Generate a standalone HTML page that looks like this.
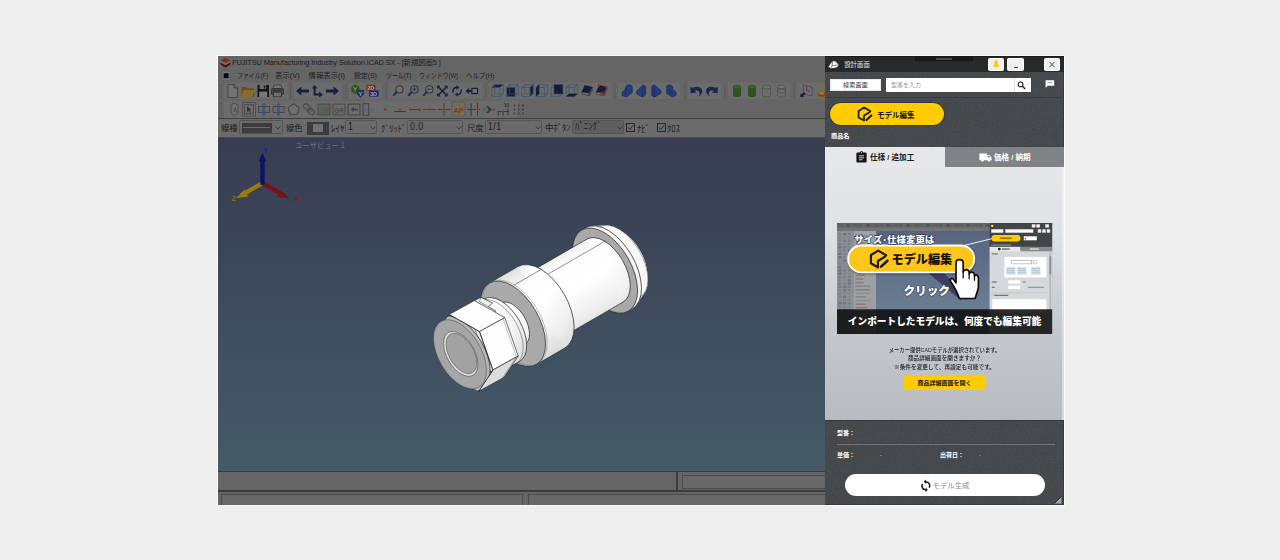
<!DOCTYPE html>
<html lang="ja">
<head>
<meta charset="utf-8">
<title>iCAD SX</title>
<style>
*{box-sizing:border-box;margin:0;padding:0}
html,body{width:1280px;height:560px;overflow:hidden;background:#eeeeee}
body{position:relative;font-family:"Liberation Sans","Noto Sans CJK JP",sans-serif;}
.abs{position:absolute}
i{font-style:normal;display:block}
#cad{position:absolute;left:218px;top:56px;width:608px;height:448.5px;background:#656565;overflow:hidden}
#cad .title{position:absolute;left:14px;top:1px;font-size:7.4px;line-height:12px;color:#1e1e1e;white-space:nowrap;letter-spacing:-0.09px}
#cad .menu{position:absolute;left:0;top:13px;height:13px;width:100%;font-size:7.4px;line-height:13px;color:#1e1e1e;white-space:nowrap}
#cad .menu span{position:absolute;top:0;transform-origin:0 50%;display:inline-block}
#view{position:absolute;left:0;top:82px;width:608px;height:333px;background:linear-gradient(#393d51 0%,#3c475a 38%,#415262 70%,#465a68 100%)}
#view .lbl{position:absolute;left:77px;top:3px;font-size:7.2px;line-height:10px;color:#6f778a;letter-spacing:0.2px;white-space:nowrap}
.hline{position:absolute;left:0;width:100%;height:1px}
#panel{position:absolute;left:825.3px;top:56px;width:238.7px;height:448.5px;background:#43474a;overflow:hidden;box-shadow:inset -1px -1px 0 #34373a}
#panel .tbar{position:absolute;left:0;top:0;width:100%;height:16px;background:#27292b;border-top:1px solid #1b1c1d}
#panel .notch{position:absolute;left:90px;top:0;width:58px;height:5px;background:#191919;border-radius:0 0 1px 1px}
#panel .notch i{position:absolute;left:21px;top:2px;width:16px;height:2px;background:#4b4b4b}
#panel .ptitle{position:absolute;left:19.5px;top:3.9px;font-size:6.3px;line-height:10px;color:#e4e4e4;white-space:nowrap}
#panel .wb{position:absolute;top:2px;width:16px;height:13px;background:#efefef;border:1px solid #fff;border-radius:1.5px;overflow:hidden}
#panel .wb svg{position:absolute;left:-1px;top:-1px}
#panel .sbtn{position:absolute;left:5px;top:23px;width:51px;height:12px;background:#fff;border:1px solid #e8e8e8;font-size:6px;line-height:10.8px;text-align:center;color:#333;letter-spacing:0.2px}
#panel .sinp{position:absolute;left:61px;top:22px;width:145px;height:14px;background:#fff}
#panel .sinp span{position:absolute;left:5px;top:2px;font-size:6px;line-height:10px;color:#9a9a9a;white-space:nowrap}
#panel .sinp i{position:absolute;left:128px;top:0;width:1px;height:14px;background:#ddd}
#panel .ybtn{position:absolute;left:5px;top:47px;width:114px;height:22px;border-radius:11px;background:#ffcc00;box-shadow:0 0 0 0.8px #2c3150}
#panel .ybtn span{position:absolute;left:47px;top:7px;font-size:7.5px;line-height:12px;font-weight:700;color:#1a1a1a;white-space:nowrap}
#panel .pname{position:absolute;left:6px;top:74.6px;font-size:6.2px;line-height:10px;font-weight:700;color:#fff;white-space:nowrap}
#panel .tabs{position:absolute;left:0;top:90.6px;width:239px;height:20px}
#panel .tab{position:absolute;top:0;height:20px;font-size:7.6px;font-weight:700;white-space:nowrap}
#panel .tab span{position:absolute;top:5px;line-height:11px}
#panel .tab.on{left:0;width:120px;background:#e5e7e9;color:#1c1c1c}
#panel .tab.off{left:120px;width:119px;background:#7f8386;color:#fff}
#panel .content{position:absolute;left:0;top:110.6px;width:239px;height:253.4px;background:linear-gradient(#e5e7e9 0%,#dfe2e4 25%,#c5c9cd 62%,#b8bcc1 100%)}
#panel .cstrip{position:absolute;right:0;top:0;width:2px;height:100%;background:rgba(255,255,255,.42)}
#panel .msg{position:absolute;left:0;top:179px;width:239px;text-align:center;font-size:6.2px;line-height:8.6px;color:#1a1a1a;font-weight:500;white-space:nowrap}
#panel .msg span{display:block;transform-origin:50% 50%}
#panel .obtn{position:absolute;left:79px;top:209.4px;width:81px;height:14px;background:#ffcc00;font-size:6px;line-height:14px;text-align:center;color:#1a1a1a;font-weight:700;white-space:nowrap}
#panel .foot{position:absolute;left:0;top:364px;width:239px;height:85px;border-top:1px solid #33363a}
#panel .fl{position:absolute;font-size:6px;line-height:10px;font-weight:700;color:#fff;white-space:nowrap}
#panel .fd{position:absolute;font-size:6px;line-height:10px;color:#ccc}
#panel .fline{position:absolute;left:12px;top:22.8px;width:218px;height:1.4px;background:#707478}
#panel .gen{position:absolute;left:19.5px;top:53px;width:200px;height:22.3px;border-radius:11.2px;background:#fff}
#panel .gen span{position:absolute;left:88px;top:6px;font-size:7.4px;line-height:11px;color:#8a8a8a;white-space:nowrap}
#prop{position:absolute;left:0;top:63px;width:608px;height:18px;background:#6b6b6b}
#prop .pl{position:absolute;top:3.6px;line-height:11px;color:#1c1c1c;white-space:nowrap;transform-origin:0 50%;display:inline-block}
#prop .cb{position:absolute;top:1.1px;margin-left:-1px;height:14px;border:0.8px solid #545454;border-radius:1.5px;background:#6a6a6a}
#prop .cb .cv{position:absolute;top:0.3px;font-size:10px;line-height:11px;color:#1e1e1e;white-space:nowrap;letter-spacing:0.5px;transform:scaleX(.88);transform-origin:0 50%;display:inline-block}
#prop .ck{position:absolute;top:3.6px;margin-left:-1px;width:9px;height:9px;border:0.9px solid #2a2a2a;background:#6c6c6c}
.sunk{border:1px solid #4a4a4a;background:#686868}
</style>
</head>
<body>
<div class="abs" style="left:217px;top:55px;width:848px;height:450.6px;background:#f9f9f9"></div>
<div id="cad">
  <svg class="abs" style="left:2px;top:1px" width="11" height="12" viewBox="0 0 11 12"><path d="M5.500 0.800l4.800 2.600-4.800 2.800L0.600 3.400z" fill="#8e2a1c"/><path d="M0.600 3.400v2l4.900 2.800 4.800-2.800v-2L5.500 6.200z" fill="#6e7476"/><path d="M0.600 5.400v2.200l4.900 3.200 4.800-3.200V5.400L5.500 8.200z" fill="#4a120c"/></svg>
  <div class="title">FUJITSU Manufacturing Industry Solution iCAD SX - [新規図面5 ]</div>
  <svg class="abs" style="left:3px;top:14px" width="10" height="11" viewBox="0 0 10 11"><rect x="1" y="1" width="8" height="9.400" rx="1" fill="#7a7a7a" stroke="#555" stroke-width="0.600"/><rect x="2.600" y="3.200" width="5" height="5" fill="#0a0a12"/><path d="M2.600 8.800h5" stroke="#3a6a8a" stroke-width="0.800"/></svg>
  <div class="menu"><span style="left:18.500px;transform:scaleX(.80)">ファイル(F)</span><span style="left:57px;transform:scaleX(1)">表示(V)</span><span style="left:90.5px;transform:scaleX(1)">情報表示(I)</span><span style="left:136px;transform:scaleX(.93)">設定(S)</span><span style="left:167.500px;transform:scaleX(.80)">ツール(T)</span><span style="left:201px;transform:scaleX(.80)">ウィンドウ(W)</span><span style="left:247.500px;transform:scaleX(.87)">ヘルプ(H)</span></div>
  <svg class="abs" style="left:0;top:0;filter:blur(0.4px)" width="608" height="64" viewBox="0 0 608 64"><rect x="6" y="26.5" width="64" height="16.5" fill="#6b6b6b"/><rect x="76" y="26.5" width="48" height="16.5" fill="#6b6b6b"/><rect x="131" y="26.5" width="33" height="16.5" fill="#6b6b6b"/><rect x="171" y="26.5" width="93" height="16.5" fill="#6b6b6b"/><rect x="271" y="26.5" width="122" height="16.5" fill="#6b6b6b"/><rect x="400" y="26.5" width="62" height="16.5" fill="#6b6b6b"/><rect x="470" y="26.5" width="33" height="16.5" fill="#6b6b6b"/><rect x="510" y="26.5" width="62" height="16.5" fill="#6b6b6b"/><rect x="579" y="26.5" width="29" height="16.5" fill="#6b6b6b"/><rect x="2.5" y="28" width="1" height="1" fill="#4c4c4c"/><rect x="2.5" y="30" width="1" height="1" fill="#4c4c4c"/><rect x="2.5" y="32" width="1" height="1" fill="#4c4c4c"/><rect x="2.5" y="34" width="1" height="1" fill="#4c4c4c"/><rect x="2.5" y="36" width="1" height="1" fill="#4c4c4c"/><rect x="2.5" y="38" width="1" height="1" fill="#4c4c4c"/><rect x="2.5" y="40" width="1" height="1" fill="#4c4c4c"/><rect x="2.5" y="42" width="1" height="1" fill="#4c4c4c"/><rect x="72.0" y="28" width="1" height="1" fill="#4c4c4c"/><rect x="72.0" y="30" width="1" height="1" fill="#4c4c4c"/><rect x="72.0" y="32" width="1" height="1" fill="#4c4c4c"/><rect x="72.0" y="34" width="1" height="1" fill="#4c4c4c"/><rect x="72.0" y="36" width="1" height="1" fill="#4c4c4c"/><rect x="72.0" y="38" width="1" height="1" fill="#4c4c4c"/><rect x="72.0" y="40" width="1" height="1" fill="#4c4c4c"/><rect x="72.0" y="42" width="1" height="1" fill="#4c4c4c"/><rect x="127.5" y="28" width="1" height="1" fill="#4c4c4c"/><rect x="127.5" y="30" width="1" height="1" fill="#4c4c4c"/><rect x="127.5" y="32" width="1" height="1" fill="#4c4c4c"/><rect x="127.5" y="34" width="1" height="1" fill="#4c4c4c"/><rect x="127.5" y="36" width="1" height="1" fill="#4c4c4c"/><rect x="127.5" y="38" width="1" height="1" fill="#4c4c4c"/><rect x="127.5" y="40" width="1" height="1" fill="#4c4c4c"/><rect x="127.5" y="42" width="1" height="1" fill="#4c4c4c"/><rect x="167.5" y="28" width="1" height="1" fill="#4c4c4c"/><rect x="167.5" y="30" width="1" height="1" fill="#4c4c4c"/><rect x="167.5" y="32" width="1" height="1" fill="#4c4c4c"/><rect x="167.5" y="34" width="1" height="1" fill="#4c4c4c"/><rect x="167.5" y="36" width="1" height="1" fill="#4c4c4c"/><rect x="167.5" y="38" width="1" height="1" fill="#4c4c4c"/><rect x="167.5" y="40" width="1" height="1" fill="#4c4c4c"/><rect x="167.5" y="42" width="1" height="1" fill="#4c4c4c"/><rect x="267.5" y="28" width="1" height="1" fill="#4c4c4c"/><rect x="267.5" y="30" width="1" height="1" fill="#4c4c4c"/><rect x="267.5" y="32" width="1" height="1" fill="#4c4c4c"/><rect x="267.5" y="34" width="1" height="1" fill="#4c4c4c"/><rect x="267.5" y="36" width="1" height="1" fill="#4c4c4c"/><rect x="267.5" y="38" width="1" height="1" fill="#4c4c4c"/><rect x="267.5" y="40" width="1" height="1" fill="#4c4c4c"/><rect x="267.5" y="42" width="1" height="1" fill="#4c4c4c"/><rect x="396.5" y="28" width="1" height="1" fill="#4c4c4c"/><rect x="396.5" y="30" width="1" height="1" fill="#4c4c4c"/><rect x="396.5" y="32" width="1" height="1" fill="#4c4c4c"/><rect x="396.5" y="34" width="1" height="1" fill="#4c4c4c"/><rect x="396.5" y="36" width="1" height="1" fill="#4c4c4c"/><rect x="396.5" y="38" width="1" height="1" fill="#4c4c4c"/><rect x="396.5" y="40" width="1" height="1" fill="#4c4c4c"/><rect x="396.5" y="42" width="1" height="1" fill="#4c4c4c"/><rect x="466.5" y="28" width="1" height="1" fill="#4c4c4c"/><rect x="466.5" y="30" width="1" height="1" fill="#4c4c4c"/><rect x="466.5" y="32" width="1" height="1" fill="#4c4c4c"/><rect x="466.5" y="34" width="1" height="1" fill="#4c4c4c"/><rect x="466.5" y="36" width="1" height="1" fill="#4c4c4c"/><rect x="466.5" y="38" width="1" height="1" fill="#4c4c4c"/><rect x="466.5" y="40" width="1" height="1" fill="#4c4c4c"/><rect x="466.5" y="42" width="1" height="1" fill="#4c4c4c"/><rect x="506.5" y="28" width="1" height="1" fill="#4c4c4c"/><rect x="506.5" y="30" width="1" height="1" fill="#4c4c4c"/><rect x="506.5" y="32" width="1" height="1" fill="#4c4c4c"/><rect x="506.5" y="34" width="1" height="1" fill="#4c4c4c"/><rect x="506.5" y="36" width="1" height="1" fill="#4c4c4c"/><rect x="506.5" y="38" width="1" height="1" fill="#4c4c4c"/><rect x="506.5" y="40" width="1" height="1" fill="#4c4c4c"/><rect x="506.5" y="42" width="1" height="1" fill="#4c4c4c"/><rect x="575.5" y="28" width="1" height="1" fill="#4c4c4c"/><rect x="575.5" y="30" width="1" height="1" fill="#4c4c4c"/><rect x="575.5" y="32" width="1" height="1" fill="#4c4c4c"/><rect x="575.5" y="34" width="1" height="1" fill="#4c4c4c"/><rect x="575.5" y="36" width="1" height="1" fill="#4c4c4c"/><rect x="575.5" y="38" width="1" height="1" fill="#4c4c4c"/><rect x="575.5" y="40" width="1" height="1" fill="#4c4c4c"/><rect x="575.5" y="42" width="1" height="1" fill="#4c4c4c"/><rect x="6" y="45" width="294" height="17" fill="#6b6b6b"/><rect x="2.5" y="47" width="1" height="1" fill="#4c4c4c"/><rect x="2.5" y="49" width="1" height="1" fill="#4c4c4c"/><rect x="2.5" y="51" width="1" height="1" fill="#4c4c4c"/><rect x="2.5" y="53" width="1" height="1" fill="#4c4c4c"/><rect x="2.5" y="55" width="1" height="1" fill="#4c4c4c"/><rect x="2.5" y="57" width="1" height="1" fill="#4c4c4c"/><rect x="2.5" y="59" width="1" height="1" fill="#4c4c4c"/><rect x="304" y="49" width="1.4" height="1.4" fill="#4c4c4c"/><rect x="304" y="53" width="1.4" height="1.4" fill="#4c4c4c"/><rect x="304" y="57" width="1.4" height="1.4" fill="#4c4c4c"/><g transform="translate(9 28)"><path d="M1 0.5h6l3.5 3.5v9.5H1z" fill="#727272" stroke="#3c3c3c" stroke-width="0.8"/><path d="M7 0.5v3.5h3.5" fill="#5e5e5e" stroke="#3c3c3c" stroke-width="0.7"/></g><g transform="translate(23 28)"><path d="M0.5 3h4.5l1.2 1.4h6.8v8.6H0.5z" fill="#6c4e14"/><path d="M0.5 13l1.8-7h11l-1.6 7z" fill="#876a2c"/></g><g transform="translate(39 28)"><path d="M0.5 1h11.5v12H0.5z" fill="#161616"/><rect x="2.6" y="1" width="6.6" height="4" fill="#6e6e6e"/><rect x="6.8" y="1.6" width="1.6" height="2.8" fill="#161616"/><rect x="2.2" y="7.6" width="8" height="5.4" fill="#777"/></g><g transform="translate(53 28)"><path d="M3 1h7l1 3.6H2z" fill="#757575" stroke="#303030" stroke-width="0.7"/><rect x="0.5" y="4.6" width="12" height="6" rx="1" fill="#4a4a4a" stroke="#2a2a2a" stroke-width="0.7"/><rect x="2.6" y="8.2" width="7.8" height="4.6" fill="#707070" stroke="#2a2a2a" stroke-width="0.7"/><path d="M2 6.4h9" stroke="#2a2a2a" stroke-width="0.8"/></g><g transform="translate(78 28)"><path d="M0 7l5.4-4.6v3h7.6v3.2H5.4v3z" fill="#181e40"/></g><g transform="translate(93 28)"><path d="M3.6 1l2.8 3.6H4.6v5h3.6V7.8L12 10.6l-3.8 2.8v-1.8H2.6V4.6H0.8z" fill="#181e40"/></g><g transform="translate(108 28)"><path d="M13 7L7.6 2.4v3H0v3.2h7.6v3z" fill="#181e40"/></g><g transform="translate(133 28)"><path d="M0.5 3.4l3.6-2.6 4 2v4.4l-3.8 2.6-3.8-2.2z" fill="#30541f" stroke="#2c4a20" stroke-width="0.5"/><path d="M2.4 3.2l1.8 1.6 2-1.4M4.2 4.8v2.6" stroke="#9ab08a" stroke-width="0.8" fill="none"/><path d="M6 6.4h7l-0.6 4-2.9 3-2.9-3z" fill="#263c66" stroke="#16223f" stroke-width="0.6"/><path d="M7.8 8l1.7 2 1.7-2M9.5 10v2" stroke="#8aa0c0" stroke-width="0.8" fill="none"/></g><g transform="translate(148 28)"><rect x="0.5" y="0.8" width="9" height="6" fill="#7c261e"/><rect x="3" y="6.4" width="9.6" height="6.2" fill="#1a2766"/><text x="1.2" y="5.9" font-size="5.6" font-weight="700" fill="#c9a0a0" font-family="Liberation Sans,sans-serif">2D</text><text x="4" y="11.8" font-size="5.6" font-weight="700" fill="#9aa6d0" font-family="Liberation Sans,sans-serif">3D</text></g><g transform="translate(174 28)"><circle cx="7.400" cy="5.400" r="3.800" fill="#717171" stroke="#2b2b2b" stroke-width="1"/><path d="M4.400 8.200L1.800 11.200" stroke="#1e3366" stroke-width="2.200" stroke-linecap="round"/></g><g transform="translate(189 28)"><circle cx="7.400" cy="5.400" r="3.800" fill="#717171" stroke="#2b2b2b" stroke-width="1"/><path d="M4.400 8.200L1.800 11.200" stroke="#1e3366" stroke-width="2.200" stroke-linecap="round"/><path d="M5.4 5.2h4M7.4 3.2v4" stroke="#1e3366" stroke-width="1.1"/></g><g transform="translate(204 28)"><circle cx="7.400" cy="5.400" r="3.800" fill="#717171" stroke="#2b2b2b" stroke-width="1"/><path d="M4.400 8.200L1.800 11.200" stroke="#1e3366" stroke-width="2.200" stroke-linecap="round"/><path d="M5.4 5.2h4" stroke="#1e3366" stroke-width="1.1"/></g><g transform="translate(219 28)"><path d="M1.400 3l8 8M9.400 3l-8 8" stroke="#181e40" stroke-width="1.500"/><path d="M0.600 2.200h2.400M0.600 2.200v2.400M10.200 2.200H7.800M10.200 2.200v2.400M0.600 11.800h2.400M0.600 11.800V9.400M10.200 11.800H7.800M10.200 11.800V9.400" stroke="#181e40" stroke-width="1.200"/></g><g transform="translate(233 28)"><path d="M2.200 8.600A4.200 4 0 0 1 6 3.200" fill="none" stroke="#181e40" stroke-width="1.400"/><path d="M5.400 1.200l3 2.200-3 2.400z" fill="#181e40"/><path d="M10 5.400A4.200 4 0 0 1 6.200 10.800" fill="none" stroke="#181e40" stroke-width="1.400"/><path d="M6.800 12.800l-3-2.200 3-2.400z" fill="#181e40"/></g><g transform="translate(247.5 28)"><path d="M0 7l3.6-3v2h3v2h-3v2z" fill="#181e40"/><rect x="6.4" y="4.4" width="5.6" height="5.2" fill="#6f6f6f" stroke="#181e40" stroke-width="1.2"/></g><g transform="translate(273 28)"><path d="M0.6 3.4l3-2.8h8.6L9 3.4z" fill="#151c3c"/><path d="M0.6 3.4h8.4v9.2H0.6zM0.6 3.4l3-2.8h8.6L9 3.4M12.2 0.6v9.2L9 12.6M3.6 0.6v9.2h8.6M3.6 9.8l-3 2.8" fill="none" stroke="#3b526a" stroke-width="0.7"/></g><g transform="translate(288 28)"><rect x="0.6" y="3.4" width="8.4" height="9.2" fill="#151c3c"/><path d="M0.6 3.4h8.4v9.2H0.6zM0.6 3.4l3-2.8h8.6L9 3.4M12.2 0.6v9.2L9 12.6M3.6 0.6v9.2h8.6M3.6 9.8l-3 2.8" fill="none" stroke="#3b526a" stroke-width="0.7"/></g><g transform="translate(303 28)"><path d="M9 3.4l3.2-2.8v9.2L9 12.6z" fill="#151c3c"/><path d="M0.6 3.4h8.4v9.2H0.6zM0.6 3.4l3-2.8h8.6L9 3.4M12.2 0.6v9.2L9 12.6M3.6 0.6v9.2h8.6M3.6 9.8l-3 2.8" fill="none" stroke="#3b526a" stroke-width="0.7"/></g><g transform="translate(317.5 28)"><path d="M0.6 3.4h8.4v9.2H0.6zM0.6 3.4l3-2.8h8.6L9 3.4M12.2 0.6v9.2L9 12.6M3.6 0.6v9.2h8.6M3.6 9.8l-3 2.8" fill="none" stroke="#3b526a" stroke-width="0.7"/><path d="M0.6 3.4l3-2.8v9.2l-3 2.8z" fill="#151c3c"/></g><g transform="translate(332.5 28)"><path d="M0.6 3.4h8.4v9.2H0.6zM0.6 3.4l3-2.8h8.6L9 3.4M12.2 0.6v9.2L9 12.6M3.6 0.6v9.2h8.6M3.6 9.8l-3 2.8" fill="none" stroke="#3b526a" stroke-width="0.7"/><rect x="3.6" y="0.6" width="8.6" height="9.2" fill="#151c3c"/></g><g transform="translate(347.5 28)"><path d="M0.6 3.4h8.4v9.2H0.6zM0.6 3.4l3-2.8h8.6L9 3.4M12.2 0.6v9.2L9 12.6M3.6 0.6v9.2h8.6M3.6 9.8l-3 2.8" fill="none" stroke="#3b526a" stroke-width="0.7"/><path d="M0.6 12.6l3-2.8h8.6L9 12.6z" fill="#151c3c"/></g><g transform="translate(363 28)"><path d="M0.600 7.900l7.500 1.200v2.500L1.200 10.400z" fill="#6a6c70" stroke="#2b2b2b" stroke-width="0.500"/><path d="M8.100 9.100l3.150-6.200 0.250 2.500-3.100 6.200z" fill="#55575b" stroke="#2b2b2b" stroke-width="0.500"/><path d="M3.750 1l7.500 1.900-3.150 6.200-7.500-1.200z" fill="#151c3c"/></g><g transform="translate(377.5 28)"><path d="M0.600 7.900l7.500 1.200v2.500L1.200 10.400z" fill="#6a6c70" stroke="#2b2b2b" stroke-width="0.500"/><path d="M8.100 9.100l3.150-6.200 0.250 2.500-3.100 6.200z" fill="#55575b" stroke="#2b2b2b" stroke-width="0.500"/><path d="M3.750 1l7.500 1.900-3.150 6.200-7.500-1.200z" fill="#151c3c"/><circle cx="3.400" cy="1.600" r="1.400" fill="#a32416"/><circle cx="10.600" cy="2.800" r="1.400" fill="#a32416"/><circle cx="6.400" cy="9" r="1.400" fill="#a32416"/></g><g transform="translate(403 28)"><path d="M1 8.4l3.4-3.2 1-3.6 3.2-1 2.6 1.8v6.2L5.6 12.8 1 11.4z" fill="#233f80" stroke="#162650" stroke-width="0.7"/><path d="M7 4.4L4.4 7 4 11" stroke="#162650" stroke-width="0.7" fill="none"/></g><g transform="translate(418 28)"><path d="M0.8 7.2L6.8 1l2.8 1.4v8.4l-3 2.2L0.8 10z" fill="#233f80" stroke="#162650" stroke-width="0.7"/><path d="M6.6 3.4v9" stroke="#162650" stroke-width="0.7"/></g><g transform="translate(433 28)"><path d="M0.8 2.2L3.4 1l6.4 5.6v2.8L3.6 13 0.8 11.4z" fill="#233f80" stroke="#162650" stroke-width="0.7"/><path d="M3.4 3.4v9" stroke="#162650" stroke-width="0.7"/></g><g transform="translate(448 28)"><path d="M0.8 1.8l2.6-1 2.8 1.4 0.8 3.6 3 2.4v3L6.6 13 0.8 9.6z" fill="#233f80" stroke="#162650" stroke-width="0.7"/><path d="M3.4 3.4l0.6 4.6 3 2.6" stroke="#162650" stroke-width="0.7" fill="none"/></g><g transform="translate(472 28)"><path d="M0.4 3l0.2 6.2 6-0.6-2-1.8q3-1.6 4.6 1 1 2-0.6 5 4.4-3.2 3.4-7.2Q9.800 1 3 3.800z" fill="#1c274c"/></g><g transform="translate(487.5 28)"><path d="M12.4 3l-0.2 6.200-6-0.600 2-1.800q-3-1.600-4.600 1-1 2 0.600 5-4.400-3.200-3.400-7.200Q3 1 9.800 3.800z" fill="#1c274c"/></g><g transform="translate(514.5 28)"><path d="M0.5 3v8a4 2 0 0 0 8 0V3z" fill="#30541f"/><ellipse cx="4.500" cy="3" rx="4" ry="2" fill="#3c6029" stroke="#2d4f1f" stroke-width="0.5"/></g><g transform="translate(529.5 28)"><path d="M0.5 3v8a4 2 0 0 0 8 0V3z" fill="#30541f"/><ellipse cx="4.500" cy="3" rx="4" ry="2" fill="#3c6029" stroke="#2d4f1f" stroke-width="0.5"/></g><g transform="translate(544 28)"><path d="M0.500 3v8a4 2 0 0 0 8 0V3" fill="#6d6d6d" stroke="#40593a" stroke-width="0.8"/><ellipse cx="4.500" cy="3" rx="4" ry="2" fill="#727272" stroke="#40593a" stroke-width="0.800"/></g><g transform="translate(559 28)"><path d="M0.500 3v8a4 2 0 0 0 8 0V3" fill="#6d6d6d" stroke="#40593a" stroke-width="0.8"/><ellipse cx="4.500" cy="3" rx="4" ry="2" fill="#727272" stroke="#40593a" stroke-width="0.800"/><ellipse cx="4.5" cy="7" rx="4" ry="2" fill="none" stroke="#40593a" stroke-width="0.7"/></g><g transform="translate(582 28)"><path d="M3.4 1l8.600 2.400v8.400L3.400 9.800z" fill="#707078" stroke="#2a3c7a" stroke-width="0.7"/><path d="M0.400 13V9.400l1.200 1.200L4 8.200l1.400 1.400L3 12l1.200 1z" fill="#10163a"/><path d="M6.400 3v4h3.600" stroke="#7c261e" stroke-width="0.9" fill="none"/><circle cx="6.400" cy="3.600" r="1" fill="#b0281a"/></g><g transform="translate(599 28)"><rect x="0.600" y="0.800" width="8" height="5" rx="2" fill="#6d6d6d" stroke="#876a2c" stroke-width="0.9"/><rect x="0.600" y="7.400" width="8" height="5.600" rx="2.400" fill="#8c3a1c" stroke="#876a2c" stroke-width="0.9"/><ellipse cx="4.600" cy="9.400" rx="3" ry="1.300" fill="#a27c2c"/></g><g transform="translate(11 46.5)"><path d="M2 2.400l3.600-2 3.400 2v8L5.400 13 2 10.600z" fill="#707070" stroke="#454545" stroke-width="0.8"/><path d="M4.600 5.400l4 4.400M6.400 5l-1.200 5" stroke="#454545" stroke-width="0.9"/></g><g transform="translate(24 46.0)"><rect x="0.500" y="0.500" width="13" height="13.500" fill="#6e6e6e" stroke="#505050" stroke-width="1"/><rect x="2.400" y="2.800" width="9" height="9" fill="none" stroke="#454545" stroke-width="1"/><path d="M5 4.600l4.400 3-2 0.400 1.400 2.200-1 0.600-1.400-2.200-1.400 1.400z" fill="#2e2e2e"/></g><g transform="translate(40 46.5)"><rect x="0.600" y="4" width="11" height="6" fill="none" stroke="#454545" stroke-width="1"/><path d="M6 0l2 2.600H4zM6 14l2-2.600H4z" fill="#38557f"/><rect x="4.400" y="2.400" width="3.200" height="9.200" fill="#38557f" opacity="0.85"/></g><g transform="translate(54.5 46.5)"><rect x="0.600" y="4" width="11" height="6" fill="none" stroke="#454545" stroke-width="1"/><path d="M6 0l2 2.600H4zM6 14l2-2.600H4z" fill="#38557f"/><rect x="4.400" y="2.400" width="3.200" height="9.200" fill="#38557f" opacity="0.85"/></g><g transform="translate(69.5 46.5)"><path d="M6.200 1.200l5.600 4.200-2.200 6.600H2.800L0.600 5.400z" fill="#6f6f6f" stroke="#454545" stroke-width="1.100"/></g><g transform="translate(84.5 46.5)"><ellipse cx="4.500" cy="4.600" rx="3.800" ry="2.600" transform="rotate(40 4.500 4.600)" fill="none" stroke="#454545" stroke-width="1"/><ellipse cx="8.500" cy="9" rx="3.800" ry="2.600" transform="rotate(40 8.500 9)" fill="none" stroke="#454545" stroke-width="1"/><ellipse cx="6.500" cy="6.800" rx="3.400" ry="2.200" transform="rotate(40 6.500 6.800)" fill="none" stroke="#555" stroke-width="0.800"/></g><g transform="translate(99.5 46.5)"><rect x="0.500" y="1.600" width="12" height="10.800" fill="#5b665b" stroke="#454545" stroke-width="0.900"/><text x="1.800" y="10.400" font-size="7" font-weight="700" fill="#4e5a4e" font-family="Liberation Sans,sans-serif" textLength="9.400" lengthAdjust="spacingAndGlyphs">GR</text></g><g transform="translate(114.5 46.5)"><rect x="0.500" y="1.600" width="12" height="10.800" fill="#6b6b6b" stroke="#454545" stroke-width="0.900"/><text x="1.800" y="10.400" font-size="7" font-weight="700" fill="#4c4c4c" font-family="Liberation Sans,sans-serif" textLength="9.400" lengthAdjust="spacingAndGlyphs">GR</text></g><g transform="translate(129.5 46.5)"><rect x="0.600" y="1.600" width="11.800" height="10.800" fill="#6e6e6e" stroke="#454545" stroke-width="1.100"/><path d="M3 7l3.400-2.800v1.800h4v2h-4v1.800z" fill="#454545"/></g><g transform="translate(144.5 46.5)"><rect x="0.600" y="1.200" width="5.600" height="11.600" fill="#6e6e6e" stroke="#454545" stroke-width="1.100"/><circle cx="3.400" cy="7" r="1.400" fill="#5a6486"/><circle cx="9.600" cy="7" r="1.500" fill="#5a6486"/></g><g transform="translate(161 46.5)"><circle cx="6" cy="7" r="1.500" fill="#80433a"/></g><g transform="translate(176 46.5)"><path d="M0 9h12" stroke="#3f3f3f" stroke-width="1"/><circle cx="6" cy="7" r="1.500" fill="#80433a"/></g><g transform="translate(191 46.5)"><path d="M0.600 7h11" stroke="#3f3f3f" stroke-width="1"/><circle cx="1.600" cy="7" r="1.500" fill="#80433a"/><circle cx="10.800" cy="7" r="1.500" fill="#80433a"/></g><g transform="translate(205 46.5)"><path d="M0 7h13" stroke="#3f3f3f" stroke-width="1"/><circle cx="6.500" cy="7" r="1.500" fill="#80433a"/></g><g transform="translate(220 46.5)"><path d="M0 7h12M6 0.500v13" stroke="#3f3f3f" stroke-width="1"/><circle cx="6" cy="7" r="1.500" fill="#80433a"/></g><g transform="translate(233.5 45.5)"><rect x="0.500" y="0.500" width="13" height="14" fill="#776d50" stroke="#5a5a5a" stroke-width="1"/><text x="2" y="11.400" font-size="8" font-weight="700" fill="#743a2e" font-family="Liberation Sans,sans-serif" textLength="10" lengthAdjust="spacingAndGlyphs">AP</text></g><g transform="translate(249.5 46.5)"><path d="M0 7h12.500M3.600 0.500v13M10 0.500v13" stroke="#3a3a3a" stroke-width="1"/><circle cx="10" cy="7" r="1.400" fill="#80433a"/><circle cx="7" cy="4" r="0.800" fill="#4e5e86"/></g><g transform="translate(264.5 46.5)"><path d="M3.400 3.400l2.600 0 3.200 3.600-3.200 3.600h-2.600l2.800-3.600z" fill="#3c3c3c"/><circle cx="1.600" cy="7" r="1.300" fill="#4e5a80"/><circle cx="11" cy="7" r="1.400" fill="#80433a"/></g><g transform="translate(279.5 46.5)"><path d="M0 9h11.500M0.800 9v4M5.600 9v4M10.400 6v7" stroke="#3a3a3a" stroke-width="1"/><circle cx="5.600" cy="9" r="1.100" fill="#80433a"/><text x="6.200" y="4.600" font-size="5" font-weight="700" fill="#333" font-family="Liberation Sans,sans-serif">10</text></g><g transform="translate(295 46.5)"><circle cx="1.4" cy="3" r="1" fill="#3f3f4a"/><circle cx="1.4" cy="7" r="1" fill="#3f3f4a"/><circle cx="1.4" cy="11" r="1" fill="#3f3f4a"/><circle cx="5.699999999999999" cy="3" r="1" fill="#3f3f4a"/><circle cx="5.699999999999999" cy="7" r="1" fill="#3f3f4a"/><circle cx="5.699999999999999" cy="11" r="1" fill="#3f3f4a"/><circle cx="10.0" cy="3" r="1" fill="#3f3f4a"/><circle cx="10.0" cy="7" r="1" fill="#3f3f4a"/><circle cx="10.0" cy="11" r="1" fill="#3f3f4a"/></g></svg>
  <i class="abs" style="left:0;top:61.500px;width:608px;height:1.600px;background:#3f3f3f"></i>
  <div id="prop"><span class="pl" style="left:3px;font-size:8.3px;transform:scaleX(1);">線種</span><div class="cb" style="left:22px;width:44px"><i style="position:absolute;left:1.500px;top:1.500px;width:30px;height:10px;background:#3c3c3c"></i><i style="position:absolute;left:3px;top:5.500px;width:27px;height:1.600px;background:#6c6c6c"></i><svg class="abs" style="left:35px;top:5px" width="6" height="4" viewBox="0 0 6 4"><path d="M0.6 0.6l2.400 2.400 2.400-2.400" fill="none" stroke="#2e2e2e" stroke-width="0.800"/></svg></div><span class="pl" style="left:68px;font-size:8.3px;transform:scaleX(1);">線色</span><i class="abs" style="left:89px;top:3.2px;width:22px;height:12.6px;background:#3d3d3d"></i><i class="abs" style="left:95px;top:4.7px;width:10px;height:8.4px;background:#727272"></i><span class="pl" style="left:113px;font-size:9.4px;transform:scaleX(0.95);">ﾚｲﾔ</span><div class="cb" style="left:128px;width:32px"><span class="cv" style="left:2px">1</span><svg class="abs" style="left:24px;top:5px" width="6" height="4" viewBox="0 0 6 4"><path d="M0.6 0.6l2.400 2.400 2.400-2.400" fill="none" stroke="#2e2e2e" stroke-width="0.800"/></svg></div><span class="pl" style="left:162.5px;font-size:9.4px;transform:scaleX(0.88);">ｸﾞﾘｯﾄﾞ</span><div class="cb" style="left:190px;width:56px"><span class="cv" style="left:1.5px">0.0</span><svg class="abs" style="left:48px;top:5px" width="6" height="4" viewBox="0 0 6 4"><path d="M0.6 0.6l2.400 2.400 2.400-2.400" fill="none" stroke="#2e2e2e" stroke-width="0.800"/></svg></div><span class="pl" style="left:249px;font-size:8.3px;transform:scaleX(1);">尺度</span><div class="cb" style="left:268px;width:57px"><span class="cv" style="left:1.5px">1/1</span><svg class="abs" style="left:49px;top:5px" width="6" height="4" viewBox="0 0 6 4"><path d="M0.6 0.6l2.400 2.400 2.400-2.400" fill="none" stroke="#2e2e2e" stroke-width="0.800"/></svg></div><span class="pl" style="left:327px;font-size:9.2px;transform:scaleX(0.92);">中ﾎﾞﾀﾝ</span><div class="cb" style="background:#5f5f5f;left:354.5px;width:52px"><span class="cv" style="letter-spacing:0;left:2px">ﾊﾟﾆﾝｸﾞ</span><svg class="abs" style="left:44px;top:5px" width="6" height="4" viewBox="0 0 6 4"><path d="M0.6 0.6l2.400 2.400 2.400-2.400" fill="none" stroke="#2e2e2e" stroke-width="0.800"/></svg></div><div class="ck" style="left:408.5px"><svg width="9" height="9" viewBox="0 0 9 9" class="abs" style="left:-0.5px;top:-0.5px"><path d="M1.800 4.400l2 2.200 3.400-4.400" fill="none" stroke="#262626" stroke-width="0.900"/></svg></div><span class="pl" style="left:419px;font-size:9.4px;transform:scaleX(0.92);">ﾅﾋﾞ</span><div class="ck" style="left:439.5px"><svg width="9" height="9" viewBox="0 0 9 9" class="abs" style="left:-0.5px;top:-0.5px"><path d="M1.800 4.400l2 2.200 3.400-4.400" fill="none" stroke="#262626" stroke-width="0.900"/></svg></div><span class="pl" style="left:449px;font-size:9.4px;transform:scaleX(0.92);">ｸﾛｽ</span></div>
  <i class="abs" style="left:0;top:80.8px;width:608px;height:1.200px;background:#484848"></i>
  <div id="view"><div class="lbl">ユーザビュー１</div><svg class="abs" style="left:0;top:0" width="608" height="333" viewBox="218 138 608 333"><path d="M262.5 183.2L241 195.400" stroke="#9a7c0a" stroke-width="4.200"/><path d="M244.600 189.600l-8.600 8.600 12.200-1.600z" fill="#9a7c0a"/><path d="M262.5 183.2L284 195.400" stroke="#741414" stroke-width="4.200"/><path d="M280.400 189.600l8.600 8.600-12.200-1.600z" fill="#741414"/><path d="M262.5 184.7V160" stroke="#10126a" stroke-width="4.400"/><path d="M262.5 152.400l3.900 9h-7.800z" fill="#10126a"/><text x="263.200" y="152.600" font-size="6.800" font-weight="700" fill="#1a2088" font-family="Liberation Sans,sans-serif">Y</text><text x="294.600" y="200.800" font-size="6.800" font-weight="700" fill="#7e1a18" font-family="Liberation Sans,sans-serif">X</text><text x="231.800" y="200.800" font-size="6.800" font-weight="700" fill="#8a7010" font-family="Liberation Sans,sans-serif">Z</text><defs><linearGradient id="cg" gradientUnits="userSpaceOnUse" x1="487.8" y1="280.5" x2="537.8" y2="367.1"><stop offset="0" stop-color="#dadada"/><stop offset="0.12" stop-color="#ededed"/><stop offset="0.24" stop-color="#fdfdfd"/><stop offset="0.5" stop-color="#ffffff"/><stop offset="0.76" stop-color="#f0f0f0"/><stop offset="1" stop-color="#d6d6d6"/></linearGradient><linearGradient id="cg2" gradientUnits="userSpaceOnUse" x1="585" y1="225" x2="630" y2="303"><stop offset="0" stop-color="#ffffff"/><stop offset="0.5" stop-color="#f6f6f6"/><stop offset="1" stop-color="#d8d8d8"/></linearGradient><linearGradient id="cg3" gradientUnits="userSpaceOnUse" x1="485" y1="300" x2="520" y2="362"><stop offset="0" stop-color="#ffffff"/><stop offset="0.6" stop-color="#f4f4f4"/><stop offset="1" stop-color="#d9d9d9"/></linearGradient></defs><ellipse cx="627.1" cy="257.9" rx="10.6" ry="19.0" transform="rotate(-30 627.1 257.9)" fill="#fafafa" stroke="none" stroke-width="0.65" /><ellipse cx="625.3" cy="258.9" rx="15.7" ry="28.0" transform="rotate(-30 625.3 258.9)" fill="#fafafa" stroke="none" stroke-width="0.65" /><ellipse cx="622.7" cy="260.4" rx="19.9" ry="35.5" transform="rotate(-30 622.7 260.4)" fill="#fafafa" stroke="none" stroke-width="0.65" /><ellipse cx="619.3" cy="262.4" rx="23.0" ry="41.0" transform="rotate(-30 619.3 262.4)" fill="#fafafa" stroke="none" stroke-width="0.65" /><ellipse cx="613.6" cy="265.6" rx="24.9" ry="44.5" transform="rotate(-30 613.6 265.6)" fill="#fafafa" stroke="none" stroke-width="0.65" /><ellipse cx="613.6" cy="265.6" rx="24.9" ry="44.5" transform="rotate(-30 613.6 265.6)" fill="url(#cg2)" stroke="#222" stroke-width="0.65" /><ellipse cx="619.3" cy="262.4" rx="23.0" ry="41.0" transform="rotate(-30 619.3 262.4)" fill="#f7f7f7" stroke="none" stroke-width="0.65" /><ellipse cx="622.7" cy="260.4" rx="19.9" ry="35.5" transform="rotate(-30 622.7 260.4)" fill="#f7f7f7" stroke="none" stroke-width="0.65" /><ellipse cx="625.3" cy="258.9" rx="15.7" ry="28.0" transform="rotate(-30 625.3 258.9)" fill="#f7f7f7" stroke="none" stroke-width="0.65" /><ellipse cx="627.1" cy="257.9" rx="10.6" ry="19.0" transform="rotate(-30 627.1 257.9)" fill="#f7f7f7" stroke="none" stroke-width="0.65" /><ellipse cx="619.7" cy="262.1" rx="22.7" ry="40.5" transform="rotate(-30 619.7 262.1)" fill="none" stroke="#444" stroke-width="0.45" /><ellipse cx="608.9" cy="268.4" rx="26.2" ry="46.8" transform="rotate(-30 608.9 268.4)" fill="#f4f4f4" stroke="#222" stroke-width="0.65" /><path d="M581.6 230.1L585.5 227.8L632.3 308.9L628.4 311.1Z" fill="#f4f4f4" stroke="none"/><path d="M581.6 230.1L585.5 227.8M628.4 311.1L632.3 308.9" stroke="#222" stroke-width="0.65" fill="none"/><ellipse cx="605.0" cy="270.6" rx="26.2" ry="46.8" transform="rotate(-30 605.0 270.6)" fill="#a9a9a9" stroke="#222" stroke-width="0.65" /><ellipse cx="605.0" cy="270.6" rx="20.3" ry="36.3" transform="rotate(-30 605.0 270.6)" fill="url(#cg)" stroke="#222" stroke-width="0.65" /><path d="M523.3 275.9L586.8 239.2L623.1 302.0L559.6 338.7Z" fill="url(#cg)" stroke="none"/><path d="M523.3 275.9L586.8 239.2M559.6 338.7L623.1 302.0" stroke="#222" stroke-width="0.65" fill="none"/><path d="M542.2 277.5L605.8 240.8" stroke="#222" stroke-width="0.5"/><ellipse cx="541.4" cy="307.3" rx="20.3" ry="36.3" transform="rotate(-30 541.4 307.3)" fill="#fff" stroke="#222" stroke-width="0.65" /><ellipse cx="541.4" cy="307.3" rx="26.3" ry="47.0" transform="rotate(-30 541.4 307.3)" fill="url(#cg)" stroke="#222" stroke-width="0.65" /><path d="M489.3 283.1L517.9 266.6L564.9 348.0L536.3 364.5Z" fill="url(#cg)" stroke="none"/><path d="M489.3 283.1L517.9 266.6M536.3 364.5L564.9 348.0" stroke="#222" stroke-width="0.65" fill="none"/><path d="M513.9 285.2L542.5 268.7" stroke="#222" stroke-width="0.5"/><ellipse cx="512.8" cy="323.8" rx="26.3" ry="47.0" transform="rotate(-30 512.8 323.8)" fill="#a9a9a9" stroke="#222" stroke-width="0.65" /><ellipse cx="514.6" cy="322.8" rx="26.3" ry="47.0" transform="rotate(-30 514.6 322.8)" fill="none" stroke="#666" stroke-width="0.4" /><ellipse cx="512.8" cy="323.8" rx="13.4" ry="24.0" transform="rotate(-30 512.8 323.8)" fill="url(#cg)" stroke="#222" stroke-width="0.65" /><path d="M489.6 309.5L500.8 303.0L524.8 344.6L513.6 351.1Z" fill="url(#cg)" stroke="none"/><path d="M489.6 309.5L500.8 303.0M513.6 351.1L524.8 344.6" stroke="#222" stroke-width="0.65" fill="none"/><ellipse cx="501.6" cy="330.3" rx="13.4" ry="24.0" transform="rotate(-30 501.6 330.3)" fill="#f2f2f2" stroke="#222" stroke-width="0.65" /><ellipse cx="501.6" cy="330.3" rx="20.2" ry="36.0" transform="rotate(-30 501.6 330.3)" fill="url(#cg3)" stroke="#222" stroke-width="0.65" /><path d="M467.5 308.4L483.6 299.1L519.6 361.5L503.5 370.7Z" fill="url(#cg3)" stroke="none"/><path d="M467.5 308.4L483.6 299.1M503.5 370.7L519.6 361.5" stroke="#222" stroke-width="0.65" fill="none"/><ellipse cx="485.5" cy="339.6" rx="20.2" ry="36.0" transform="rotate(-30 485.5 339.6)" fill="#ececec" stroke="#222" stroke-width="0.65" /><ellipse cx="498.1" cy="332.3" rx="20.2" ry="36.0" transform="rotate(-30 498.1 332.3)" fill="none" stroke="#444" stroke-width="0.45" /><path d="M474.600 300.600l6.400-3.400 11.600 6-4.200 3.400 7.400 4.400-3 2.200z" fill="#f1f1f1" stroke="#222" stroke-width="0.65" stroke-linejoin="round"/><path d="M481 297.200l-1.600 4.400 9 5.200" fill="none" stroke="#222" stroke-width="0.45"/><path d="M449.1 314.6L479.5 331.6L504.8 317.6L474.4 300.6Z" fill="#fefefe" stroke="#222" stroke-width="0.65" stroke-linejoin="round"/><path d="M479.5 331.6L492.9 370.0L518.2 356.0L504.8 317.6Z" fill="#fdfdfd" stroke="#222" stroke-width="0.65" stroke-linejoin="round"/><path d="M492.9 370.0L478.6 391.4L503.9 377.4L518.2 356.0Z" fill="#dcdcdc" stroke="#222" stroke-width="0.65" stroke-linejoin="round"/><path d="M503.0 318.6L516.4 357.0L502.1 378.4" fill="none" stroke="#555" stroke-width="0.4"/><clipPath id="hx"><path d="M449.1 314.6L479.5 331.6L492.9 370.0L478.6 391.4L448.2 374.4L434.8 336.0Z"/></clipPath><clipPath id="hx2"><path d="M448.8 313.8L479.8 331.2L493.5 370.3L478.9 392.2L447.9 374.8L434.2 335.7Z"/></clipPath><g clip-path="url(#hx)"><ellipse cx="461.3" cy="353.6" rx="23.2" ry="41.5" transform="rotate(-30 461.3 353.6)" fill="#b8b8b8" stroke="none" stroke-width="0.65" /></g><g clip-path="url(#hx2)"><ellipse cx="461.3" cy="353.6" rx="23.2" ry="41.5" transform="rotate(-30 461.3 353.6)" fill="none" stroke="#222" stroke-width="0.65" /></g><path d="M449.1 314.6L479.5 331.6L492.9 370.0L478.6 391.4" fill="none" stroke="#222" stroke-width="0.65" stroke-linejoin="round"/><ellipse cx="460.0" cy="354.3" rx="21.3" ry="38.0" transform="rotate(-30 460.0 354.3)" fill="#a6a6a6" stroke="#4a4a4a" stroke-width="0.5" /><ellipse cx="460.7" cy="353.9" rx="13.8" ry="24.6" transform="rotate(-30 460.7 353.9)" fill="#e2e2e2" stroke="#3a3a3a" stroke-width="0.5" /><ellipse cx="461.4" cy="353.5" rx="12.4" ry="22.2" transform="rotate(-30 461.4 353.5)" fill="#a2a2a2" stroke="#4a4a4a" stroke-width="0.5" /></svg></div>
  <i class="abs" style="left:0;top:414.600px;width:608px;height:1.600px;background:#3b3b3b"></i>
  <i class="abs" style="left:0;top:434px;width:608px;height:1.600px;background:#3b3b3b"></i>
  <i class="abs" style="left:458px;top:416px;width:1.600px;height:18px;background:#3b3b3b"></i>
  <i class="abs sunk" style="left:464px;top:418.500px;width:160px;height:14px"></i>
  <i class="abs sunk" style="left:3px;top:438px;width:302px;height:14px"></i>
  <i class="abs sunk" style="left:309.500px;top:438px;width:320px;height:14px"></i>
</div>

<div id="panel"><div class="abs" style="left:-0.3px;top:0;width:239px;height:449px">
  <svg class="abs" style="left:0;top:0" width="239" height="449"><filter id="nz" x="0" y="0" width="100%" height="100%"><feTurbulence type="fractalNoise" baseFrequency="0.9" numOctaves="2" seed="3" result="t"/><feColorMatrix type="matrix" values="0 0 0 0 1  0 0 0 0 1  0 0 0 0 1  0.9 0 0 0 -0.38"/></filter><rect width="239" height="449" filter="url(#nz)" opacity="0.16"/></svg>
  <div class="tbar"></div>
  <div class="notch"><i></i></div>
  <svg class="abs" style="left:3px;top:4px" width="11.4" height="9.6" viewBox="0 0 13 11"><path d="M0.6 7.6 L5.2 1.2 L8.6 1.6 L12.4 5.6 L10.2 8.4 L3.4 9.8 Z" fill="#fff"/><path d="M3.4 9.8 L4.6 6.6 L12.4 5.6 M4.6 6.6 L5.2 1.2" stroke="#2a2c2f" stroke-width="0.7" fill="none"/></svg>
  <div class="ptitle">設計画面</div>
  <div class="wb" style="left:163px"><svg width="16" height="13" viewBox="0 0 16 13"><path d="M6.200 2.600h3.800v0.900l-0.600 0.400 0.500 2.800 1.400 1.300v0.800H8.500v1.600L8.100 11l-0.400-0.600V8.800H4.900V8l1.400-1.300 0.500-2.800-0.600-0.400z" fill="#ffc800"/></svg></div>
  <div class="wb" style="left:182px;width:17px"><i style="position:absolute;left:5.5px;top:7.6px;width:4px;height:1px;background:#444"></i></div>
  <div class="wb" style="left:219px"><svg width="16" height="13" viewBox="0 0 16 13"><path d="M5.4 3.9l5.2 5.2M10.6 3.9l-5.2 5.2" stroke="#333" stroke-width="0.9" fill="none"/></svg></div>
  <div class="sbtn">検索画面</div>
  <div class="sinp"><span>型番を入力</span><i></i><svg class="abs" style="left:130px;top:2px" width="12" height="11" viewBox="0 0 12 11"><circle cx="4.6" cy="4.4" r="2.4" fill="none" stroke="#222" stroke-width="1.1"/><path d="M6.4 6.2l2.8 2.8" stroke="#222" stroke-width="1.4"/></svg></div>
  <svg class="abs" style="left:220px;top:24px" width="10" height="9" viewBox="0 0 10 9"><path d="M0.6 0.2h8.6v5.6H2.6L0.6 8z" fill="#fff"/><path d="M2.4 2.6h5" stroke="#9a9ea2" stroke-width="1"/></svg>
  <div class="hline" style="top:41px;background:#393c3f"></div>
  <div class="ybtn"><svg class="abs" style="left:26px;top:3px" width="18" height="17" viewBox="0 0 18 17"><path d="M8.2 1.6 L14.4 5.2 M8.2 1.6 L2.6 5 L2.6 11.4 L8 14.6 L8 9.6 L13.6 6.2" fill="none" stroke="#1a1a1a" stroke-width="1.7" stroke-linejoin="round" stroke-linecap="round"/><path d="M10.4 14 L15.4 9.4" stroke="#1a1a1a" stroke-width="2" stroke-linecap="round"/></svg><span>モデル編集</span></div>
  <div class="pname">商品名</div>
  <div class="tabs">
    <div class="tab on"><svg class="abs" style="left:31px;top:4px" width="11" height="12" viewBox="0 0 11 12"><path d="M1.4 1.6h2.4a1.7 1.4 0 0 1 3.4 0h2.4q1 0 1 1v8q0 1-1 1H1.4q-1 0-1-1v-8q0-1 1-1z" fill="#151515"/><path d="M3 4.8h5M3 6.8h5M3 8.8h3.4" stroke="#e8e8e8" stroke-width="0.9"/><circle cx="5.5" cy="1.7" r="0.6" fill="#e8e8e8"/></svg><span style="left:45px">仕様 / 追加工</span></div>
    <div class="tab off"><svg class="abs" style="left:34px;top:6px" width="13" height="9" viewBox="0 0 13 9"><path d="M0.4 0.4h7.6v1.6h2.4l2.2 2.4v2.8h-1.2a1.4 1.4 0 0 1-2.8 0H5a1.4 1.4 0 0 1-2.8 0H0.4z" fill="#fff"/><path d="M8.6 2.8h1.4l1.4 1.6H8.6z" fill="#85898c"/></svg><span style="left:49px">価格 / 納期</span></div>
  </div>
  <div class="content">
    <div class="cstrip"></div>
    <svg class="abs" style="left:12.200000000000045px;top:56.1px" width="215.4" height="111.2" viewBox="837.2 222.7 215.4 111.2"><defs><linearGradient id="bv" x1="0" y1="0" x2="0" y2="1"><stop offset="0" stop-color="#56627f"/><stop offset="1" stop-color="#6f8597"/></linearGradient><clipPath id="bc"><rect x="837.2" y="222.7" width="215.4" height="111.2"/></clipPath><filter id="bl" x="-5%" y="-5%" width="110%" height="110%"><feGaussianBlur stdDeviation="0.35"/></filter><filter id="sh" x="-10%" y="-20%" width="120%" height="150%"><feGaussianBlur stdDeviation="1.2"/></filter></defs><g clip-path="url(#bc)"><g filter="url(#bl)"><rect x="837.2" y="222.7" width="215.4" height="111.2" fill="url(#bv)"/><path d="M927 271.500L942 271.500L966 292L961 300Z" fill="#34345a" opacity="0.85"/><rect x="837.2" y="222.7" width="153" height="4.4" fill="#5f6368"/><rect x="837.2" y="227.1" width="153" height="3.6" fill="#6f7378"/><rect x="839.2" y="223.89999999999998" width="2.2" height="2.400" fill="#4a5a78" opacity="0.45"/><rect x="843.2" y="223.89999999999998" width="2.2" height="2.400" fill="#8a7a3a" opacity="0.45"/><rect x="847.2" y="223.89999999999998" width="2.2" height="2.400" fill="#3a3a44" opacity="0.45"/><rect x="851.2" y="223.89999999999998" width="2.2" height="2.400" fill="#5a7a5a" opacity="0.45"/><rect x="855.2" y="223.89999999999998" width="2.2" height="2.400" fill="#7a4a44" opacity="0.45"/><rect x="859.2" y="223.89999999999998" width="2.2" height="2.400" fill="#4a5a78" opacity="0.45"/><rect x="863.2" y="223.89999999999998" width="2.2" height="2.400" fill="#8a7a3a" opacity="0.45"/><rect x="867.2" y="223.89999999999998" width="2.2" height="2.400" fill="#3a3a44" opacity="0.45"/><rect x="871.2" y="223.89999999999998" width="2.2" height="2.400" fill="#5a7a5a" opacity="0.45"/><rect x="875.2" y="223.89999999999998" width="2.2" height="2.400" fill="#7a4a44" opacity="0.45"/><rect x="879.2" y="223.89999999999998" width="2.2" height="2.400" fill="#4a5a78" opacity="0.45"/><rect x="883.2" y="223.89999999999998" width="2.2" height="2.400" fill="#8a7a3a" opacity="0.45"/><rect x="887.2" y="223.89999999999998" width="2.2" height="2.400" fill="#3a3a44" opacity="0.45"/><rect x="891.2" y="223.89999999999998" width="2.2" height="2.400" fill="#5a7a5a" opacity="0.45"/><rect x="895.2" y="223.89999999999998" width="2.2" height="2.400" fill="#7a4a44" opacity="0.45"/><rect x="899.2" y="223.89999999999998" width="2.2" height="2.400" fill="#4a5a78" opacity="0.45"/><rect x="903.2" y="223.89999999999998" width="2.2" height="2.400" fill="#8a7a3a" opacity="0.45"/><rect x="907.2" y="223.89999999999998" width="2.2" height="2.400" fill="#3a3a44" opacity="0.45"/><rect x="911.2" y="223.89999999999998" width="2.2" height="2.400" fill="#5a7a5a" opacity="0.45"/><rect x="915.2" y="223.89999999999998" width="2.2" height="2.400" fill="#7a4a44" opacity="0.45"/><rect x="919.2" y="223.89999999999998" width="2.2" height="2.400" fill="#4a5a78" opacity="0.45"/><rect x="923.2" y="223.89999999999998" width="2.2" height="2.400" fill="#8a7a3a" opacity="0.45"/><rect x="927.2" y="223.89999999999998" width="2.2" height="2.400" fill="#3a3a44" opacity="0.45"/><rect x="931.2" y="223.89999999999998" width="2.2" height="2.400" fill="#5a7a5a" opacity="0.45"/><rect x="935.2" y="223.89999999999998" width="2.2" height="2.400" fill="#7a4a44" opacity="0.45"/><rect x="939.2" y="223.89999999999998" width="2.2" height="2.400" fill="#4a5a78" opacity="0.45"/><rect x="943.2" y="223.89999999999998" width="2.2" height="2.400" fill="#8a7a3a" opacity="0.45"/><rect x="947.2" y="223.89999999999998" width="2.2" height="2.400" fill="#3a3a44" opacity="0.45"/><rect x="951.2" y="223.89999999999998" width="2.2" height="2.400" fill="#5a7a5a" opacity="0.45"/><rect x="955.2" y="223.89999999999998" width="2.2" height="2.400" fill="#7a4a44" opacity="0.45"/><rect x="959.2" y="223.89999999999998" width="2.2" height="2.400" fill="#4a5a78" opacity="0.45"/><rect x="963.2" y="223.89999999999998" width="2.2" height="2.400" fill="#8a7a3a" opacity="0.45"/><rect x="967.2" y="223.89999999999998" width="2.2" height="2.400" fill="#3a3a44" opacity="0.45"/><rect x="971.2" y="223.89999999999998" width="2.2" height="2.400" fill="#5a7a5a" opacity="0.45"/><rect x="975.2" y="223.89999999999998" width="2.2" height="2.400" fill="#7a4a44" opacity="0.45"/><rect x="979.2" y="223.89999999999998" width="2.2" height="2.400" fill="#4a5a78" opacity="0.45"/><rect x="983.2" y="223.89999999999998" width="2.2" height="2.400" fill="#8a7a3a" opacity="0.45"/><rect x="987.2" y="223.89999999999998" width="2.2" height="2.400" fill="#3a3a44" opacity="0.45"/><rect x="837.2" y="230.7" width="16.5" height="111.2" fill="#8c9095"/><rect x="853.7" y="230.7" width="22.500" height="111.2" fill="#9da1a5"/><rect x="838.7" y="232.7" width="3" height="2.200" fill="#6a6e74" opacity="0.42"/><rect x="843.3000000000001" y="232.7" width="3" height="2.200" fill="#3d4a6a" opacity="0.42"/><rect x="847.9000000000001" y="232.7" width="3" height="2.200" fill="#4a5f8a" opacity="0.42"/><rect x="838.7" y="236.0" width="3" height="2.200" fill="#5a7a9a" opacity="0.42"/><rect x="843.3000000000001" y="236.0" width="3" height="2.200" fill="#7a7e84" opacity="0.42"/><rect x="847.9000000000001" y="236.0" width="3" height="2.200" fill="#7a7e84" opacity="0.42"/><rect x="838.7" y="239.3" width="3" height="2.200" fill="#6a6e74" opacity="0.42"/><rect x="843.3000000000001" y="239.3" width="3" height="2.200" fill="#4a5f8a" opacity="0.42"/><rect x="847.9000000000001" y="239.3" width="3" height="2.200" fill="#4a5f8a" opacity="0.42"/><rect x="838.7" y="242.6" width="3" height="2.200" fill="#4a5f8a" opacity="0.42"/><rect x="843.3000000000001" y="242.6" width="3" height="2.200" fill="#7a7e84" opacity="0.42"/><rect x="847.9000000000001" y="242.6" width="3" height="2.200" fill="#8a5a4a" opacity="0.42"/><rect x="838.7" y="245.9" width="3" height="2.200" fill="#3d4a6a" opacity="0.42"/><rect x="843.3000000000001" y="245.9" width="3" height="2.200" fill="#4a5f8a" opacity="0.42"/><rect x="847.9000000000001" y="245.9" width="3" height="2.200" fill="#6a6e74" opacity="0.42"/><rect x="838.7" y="249.2" width="3" height="2.200" fill="#8a5a4a" opacity="0.42"/><rect x="843.3000000000001" y="249.2" width="3" height="2.200" fill="#8a5a4a" opacity="0.42"/><rect x="847.9000000000001" y="249.2" width="3" height="2.200" fill="#3d4a6a" opacity="0.42"/><rect x="838.7" y="252.5" width="3" height="2.200" fill="#3d4a6a" opacity="0.42"/><rect x="843.3000000000001" y="252.5" width="3" height="2.200" fill="#6a6e74" opacity="0.42"/><rect x="847.9000000000001" y="252.5" width="3" height="2.200" fill="#4a5f8a" opacity="0.42"/><rect x="838.7" y="255.8" width="3" height="2.200" fill="#3d4a6a" opacity="0.42"/><rect x="843.3000000000001" y="255.8" width="3" height="2.200" fill="#6a6e74" opacity="0.42"/><rect x="847.9000000000001" y="255.8" width="3" height="2.200" fill="#4a5f8a" opacity="0.42"/><rect x="838.7" y="259.1" width="3" height="2.200" fill="#5a7a9a" opacity="0.42"/><rect x="843.3000000000001" y="259.1" width="3" height="2.200" fill="#3d4a6a" opacity="0.42"/><rect x="847.9000000000001" y="259.1" width="3" height="2.200" fill="#3d4a6a" opacity="0.42"/><rect x="838.7" y="262.4" width="3" height="2.200" fill="#6a6e74" opacity="0.42"/><rect x="843.3000000000001" y="262.4" width="3" height="2.200" fill="#6a6e74" opacity="0.42"/><rect x="847.9000000000001" y="262.4" width="3" height="2.200" fill="#3d4a6a" opacity="0.42"/><rect x="838.7" y="265.7" width="3" height="2.200" fill="#3d4a6a" opacity="0.42"/><rect x="843.3000000000001" y="265.7" width="3" height="2.200" fill="#5a7a9a" opacity="0.42"/><rect x="847.9000000000001" y="265.7" width="3" height="2.200" fill="#5a7a9a" opacity="0.42"/><rect x="838.7" y="269.0" width="3" height="2.200" fill="#3d4a6a" opacity="0.42"/><rect x="843.3000000000001" y="269.0" width="3" height="2.200" fill="#4a5f8a" opacity="0.42"/><rect x="847.9000000000001" y="269.0" width="3" height="2.200" fill="#8a5a4a" opacity="0.42"/><rect x="838.7" y="272.3" width="3" height="2.200" fill="#3d4a6a" opacity="0.42"/><rect x="843.3000000000001" y="272.3" width="3" height="2.200" fill="#5a7a9a" opacity="0.42"/><rect x="847.9000000000001" y="272.3" width="3" height="2.200" fill="#7a7e84" opacity="0.42"/><rect x="838.7" y="275.6" width="3" height="2.200" fill="#8a5a4a" opacity="0.42"/><rect x="843.3000000000001" y="275.6" width="3" height="2.200" fill="#6a6e74" opacity="0.42"/><rect x="847.9000000000001" y="275.6" width="3" height="2.200" fill="#6a6e74" opacity="0.42"/><rect x="838.7" y="278.9" width="3" height="2.200" fill="#6a6e74" opacity="0.42"/><rect x="843.3000000000001" y="278.9" width="3" height="2.200" fill="#7a7e84" opacity="0.42"/><rect x="847.9000000000001" y="278.9" width="3" height="2.200" fill="#3d4a6a" opacity="0.42"/><rect x="838.7" y="282.2" width="3" height="2.200" fill="#4a5f8a" opacity="0.42"/><rect x="843.3000000000001" y="282.2" width="3" height="2.200" fill="#8a5a4a" opacity="0.42"/><rect x="847.9000000000001" y="282.2" width="3" height="2.200" fill="#3d4a6a" opacity="0.42"/><rect x="838.7" y="285.5" width="3" height="2.200" fill="#4a5f8a" opacity="0.42"/><rect x="843.3000000000001" y="285.5" width="3" height="2.200" fill="#3d4a6a" opacity="0.42"/><rect x="847.9000000000001" y="285.5" width="3" height="2.200" fill="#8a5a4a" opacity="0.42"/><rect x="838.7" y="288.8" width="3" height="2.200" fill="#5a7a9a" opacity="0.42"/><rect x="843.3000000000001" y="288.8" width="3" height="2.200" fill="#3d4a6a" opacity="0.42"/><rect x="847.9000000000001" y="288.8" width="3" height="2.200" fill="#8a5a4a" opacity="0.42"/><rect x="838.7" y="292.1" width="3" height="2.200" fill="#6a6e74" opacity="0.42"/><rect x="843.3000000000001" y="292.1" width="3" height="2.200" fill="#7a7e84" opacity="0.42"/><rect x="847.9000000000001" y="292.1" width="3" height="2.200" fill="#7a7e84" opacity="0.42"/><rect x="838.7" y="295.4" width="3" height="2.200" fill="#8a5a4a" opacity="0.42"/><rect x="843.3000000000001" y="295.4" width="3" height="2.200" fill="#3d4a6a" opacity="0.42"/><rect x="847.9000000000001" y="295.4" width="3" height="2.200" fill="#7a7e84" opacity="0.42"/><rect x="838.7" y="298.7" width="3" height="2.200" fill="#7a7e84" opacity="0.42"/><rect x="843.3000000000001" y="298.7" width="3" height="2.200" fill="#6a6e74" opacity="0.42"/><rect x="847.9000000000001" y="298.7" width="3" height="2.200" fill="#6a6e74" opacity="0.42"/><rect x="838.7" y="302.0" width="3" height="2.200" fill="#3d4a6a" opacity="0.42"/><rect x="843.3000000000001" y="302.0" width="3" height="2.200" fill="#3d4a6a" opacity="0.42"/><rect x="847.9000000000001" y="302.0" width="3" height="2.200" fill="#4a5f8a" opacity="0.42"/><rect x="838.7" y="305.3" width="3" height="2.200" fill="#4a5f8a" opacity="0.42"/><rect x="843.3000000000001" y="305.3" width="3" height="2.200" fill="#4a5f8a" opacity="0.42"/><rect x="847.9000000000001" y="305.3" width="3" height="2.200" fill="#7a7e84" opacity="0.42"/><rect x="838.7" y="308.6" width="3" height="2.200" fill="#5a7a9a" opacity="0.42"/><rect x="843.3000000000001" y="308.6" width="3" height="2.200" fill="#3d4a6a" opacity="0.42"/><rect x="847.9000000000001" y="308.6" width="3" height="2.200" fill="#8a5a4a" opacity="0.42"/><rect x="838.7" y="311.9" width="3" height="2.200" fill="#8a5a4a" opacity="0.42"/><rect x="843.3000000000001" y="311.9" width="3" height="2.200" fill="#5a7a9a" opacity="0.42"/><rect x="847.9000000000001" y="311.9" width="3" height="2.200" fill="#7a7e84" opacity="0.42"/><rect x="838.7" y="315.2" width="3" height="2.200" fill="#5a7a9a" opacity="0.42"/><rect x="843.3000000000001" y="315.2" width="3" height="2.200" fill="#3d4a6a" opacity="0.42"/><rect x="847.9000000000001" y="315.2" width="3" height="2.200" fill="#6a6e74" opacity="0.42"/><rect x="855.7" y="234.7" width="12" height="1.600" fill="#5a5e66" opacity="0.4"/><rect x="855.7" y="238.3" width="10" height="1.600" fill="#6e7278" opacity="0.4"/><rect x="855.7" y="241.9" width="10" height="1.600" fill="#8a3a3a" opacity="0.4"/><rect x="855.7" y="245.5" width="12" height="1.600" fill="#8a3a3a" opacity="0.4"/><rect x="855.7" y="249.1" width="10" height="1.600" fill="#8a3a3a" opacity="0.4"/><rect x="855.7" y="252.7" width="6" height="1.600" fill="#6e7278" opacity="0.4"/><rect x="855.7" y="256.3" width="15" height="1.600" fill="#5a5e66" opacity="0.4"/><rect x="855.7" y="259.9" width="8" height="1.600" fill="#6e7278" opacity="0.4"/><rect x="855.7" y="263.5" width="15" height="1.600" fill="#6e7278" opacity="0.4"/><rect x="855.7" y="267.1" width="8" height="1.600" fill="#8a3a3a" opacity="0.4"/><rect x="855.7" y="270.7" width="12" height="1.600" fill="#8a3a3a" opacity="0.4"/><rect x="855.7" y="274.3" width="10" height="1.600" fill="#5a5e66" opacity="0.4"/><rect x="855.7" y="277.9" width="8" height="1.600" fill="#8a3a3a" opacity="0.4"/><rect x="855.7" y="281.5" width="8" height="1.600" fill="#8a3a3a" opacity="0.4"/><rect x="855.7" y="285.1" width="15" height="1.600" fill="#5a5e66" opacity="0.4"/><rect x="855.7" y="288.7" width="15" height="1.600" fill="#8a3a3a" opacity="0.4"/><rect x="855.7" y="292.3" width="15" height="1.600" fill="#6e7278" opacity="0.4"/><rect x="855.7" y="295.9" width="10" height="1.600" fill="#5a5e66" opacity="0.4"/><rect x="855.7" y="299.5" width="15" height="1.600" fill="#6e7278" opacity="0.4"/><rect x="855.7" y="303.1" width="10" height="1.600" fill="#8a3a3a" opacity="0.4"/><rect x="855.7" y="306.7" width="12" height="1.600" fill="#8a3a3a" opacity="0.4"/><rect x="855.7" y="310.3" width="10" height="1.600" fill="#6e7278" opacity="0.4"/><rect x="855.7" y="313.9" width="15" height="1.600" fill="#5a5e66" opacity="0.4"/><rect x="855.7" y="317.5" width="15" height="1.600" fill="#5a5e66" opacity="0.4"/><rect x="989.8" y="222.7" width="62.8" height="27.500" fill="#414447"/><rect x="989.8" y="250.2" width="62.8" height="111.2" fill="#d5d9dc"/><circle cx="992.400" cy="225.600" r="1.200" fill="#ffd21a"/><rect x="1032" y="224" width="3.600" height="3.200" fill="#f2f2f2"/><rect x="1036.5" y="224" width="3.600" height="3.200" fill="#f2f2f2"/><rect x="1045.5" y="224" width="3.600" height="3.200" fill="#f2f2f2"/><rect x="991.500" y="229" width="12" height="3.400" fill="#fff"/><rect x="1005.500" y="229" width="28" height="3.400" fill="#fff"/><rect x="1038" y="229" width="3.400" height="3.400" fill="#eee"/><rect x="1042.5" y="229" width="3.400" height="3.400" fill="#eee"/><rect x="1047" y="229" width="3.400" height="3.400" fill="#eee"/><rect x="991.700" y="234.700" width="29" height="6.500" rx="3.250" fill="#ffcc00"/><rect x="1000" y="237" width="12" height="1.800" fill="#6a5a10" opacity="0.7"/><rect x="1024" y="236" width="13" height="4" fill="#fff"/><rect x="1025" y="237.600" width="1.400" height="1.400" fill="#c33"/><rect x="991.500" y="244" width="20" height="1.500" fill="#999" opacity="0.7"/><rect x="989.8" y="246.500" width="31" height="4.500" fill="#e6e9eb"/><rect x="1020.8" y="246.500" width="32" height="4.500" fill="#85898c"/><circle cx="999.500" cy="248.800" r="1.400" fill="#222"/><rect x="1002" y="248" width="8" height="1.500" fill="#444" opacity="0.7"/><rect x="1030" y="248" width="9" height="1.500" fill="#eee" opacity="0.8"/><rect x="1004.600" y="256.600" width="42" height="20.500" fill="#fff"/><rect x="1012" y="260" width="20" height="3.600" fill="none" stroke="#888" stroke-width="0.5"/><circle cx="1035" cy="261.800" r="2" fill="none" stroke="#888" stroke-width="0.5"/><rect x="1006.5" y="266.500" width="9" height="8" fill="#cfe0ee" opacity="0.9"/><path d="M1006.5 268.500h9M1006.5 270.500h9M1006.5 272.500h9" stroke="#7a8a9a" stroke-width="0.35"/><rect x="1017.5" y="266.500" width="9" height="8" fill="#cfe0ee" opacity="0.9"/><path d="M1017.5 268.500h9M1017.5 270.500h9M1017.5 272.500h9" stroke="#7a8a9a" stroke-width="0.35"/><rect x="1031.5" y="266.500" width="9" height="8" fill="#cfe0ee" opacity="0.9"/><path d="M1031.5 268.500h9M1031.5 270.500h9M1031.5 272.500h9" stroke="#7a8a9a" stroke-width="0.35"/><rect x="992" y="253" width="6" height="1.200" fill="#777"/><rect x="1008.500" y="280" width="12" height="3.400" fill="#fff"/><rect x="1008.500" y="285.400" width="12" height="3.400" fill="#fff"/><rect x="992" y="281" width="5" height="1.300" fill="#777"/><rect x="992" y="286.400" width="3" height="1.300" fill="#777"/><rect x="1023" y="281" width="3" height="1.300" fill="#888"/><rect x="1028" y="286.400" width="16" height="1.300" fill="#999"/><rect x="990.500" y="292.300" width="58" height="0.600" fill="#b8bcc0"/><rect x="991.500" y="294" width="2" height="2" fill="#cdd86a"/><rect x="994.500" y="294.400" width="14" height="1.300" fill="#777"/><rect x="992.500" y="299" width="54" height="14" fill="#fff"/><rect x="1049.600" y="250.500" width="1.800" height="60" fill="#b4b8bc"/><rect x="1049.600" y="256" width="1.800" height="18" fill="#8a8e92"/></g><path d="M955 247.500L992 238.400" stroke="#fff" stroke-width="0.900"/><rect x="848.600" y="246.600" width="126.500" height="27" rx="13.500" fill="#000" opacity="0.55" filter="url(#sh)"/><rect x="848.300" y="245.200" width="126.200" height="26.800" rx="13.400" fill="#ffc61a" stroke="#fff" stroke-width="1.800"/><g transform="translate(867.800 248.300) scale(1.290)"><path d="M8.200 1.600 L14.400 5.200 M8.200 1.600 L2.600 5 L2.600 11.400 L8 14.600 L8 9.600 L13.600 6.200" fill="none" stroke="#1a1a1a" stroke-width="1.700" stroke-linejoin="round" stroke-linecap="round"/><path d="M10.400 14 L15.400 9.400" stroke="#1a1a1a" stroke-width="2" stroke-linecap="round"/></g><text x="891.800" y="263.300" font-size="12.200" font-family="Liberation Sans,Noto Sans CJK JP,sans-serif" font-weight="900" fill="#151515" textLength="60.500" lengthAdjust="spacingAndGlyphs">モデル編集</text><text x="854.500" y="242.300" font-size="9.200" font-family="Liberation Sans,Noto Sans CJK JP,sans-serif" font-weight="900" fill="#fff" stroke="#2f3648" stroke-width="1.300" stroke-linejoin="round" paint-order="stroke" textLength="80" lengthAdjust="spacingAndGlyphs">サイズ･仕様変更は</text><text x="903.600" y="295.200" font-size="11.800" font-family="Liberation Sans,Noto Sans CJK JP,sans-serif" font-weight="900" fill="#fff" stroke="#3a4258" stroke-width="1.200" stroke-linejoin="round" paint-order="stroke" textLength="46.500" lengthAdjust="spacingAndGlyphs">クリック</text><path d="M956.2 262.5C956.2 258.4 963.4 258.4 963.4 262.500L963.400 271.500C964.500 268.600 968.600 268.600 969.300 271.800L969.400 273.600C970.400 271 974.100 271.200 974.600 274.200L974.700 276C975.600 273.800 978.600 274.400 978.600 277.600L978.600 286C978.600 291 976 294 975.400 298.200L959.600 298.200C958 293 954 286 951 281.500C949.600 279.200 951.600 277.200 953.500 278.800L956.200 282.600Z" fill="#fff" stroke="#0e0e0e" stroke-width="1.700" stroke-linejoin="round"/><path d="M963.400 271.500V277.500M969.400 273.600V278.500M974.700 276V280" stroke="#0e0e0e" stroke-width="1.300" stroke-linecap="round"/><rect x="837.2" y="309" width="215.4" height="25" fill="#0d0d0d" opacity="0.88"/><text x="848" y="325" font-size="9.700" font-family="Liberation Sans,Noto Sans CJK JP,sans-serif" font-weight="900" fill="#fff" textLength="193.500" lengthAdjust="spacingAndGlyphs">インポートしたモデルは、何度でも編集可能</text></g></svg>
    <div class="msg"><span style="transform:scaleX(.86)">メーカー提供CADモデルが選択されています。</span><span style="transform:scaleX(.91)">商品詳細画面を開きますか？</span><span style="transform:scaleX(.915)">※条件を変更して、再設定も可能です。</span></div>
    <div class="obtn">商品詳細画面を開く</div>
  </div>
  <div class="foot">
    <span class="fl" style="left:12px;top:7.3px">型番：</span>
    <i class="fline"></i>
    <span class="fl" style="left:12px;top:29.3px">単価：</span><span class="fd" style="left:55px;top:29.3px">-</span>
    <span class="fl" style="left:115px;top:29.3px">出荷日：</span><span class="fd" style="left:154px;top:29.3px">-</span>
    <div class="gen"><svg class="abs" style="left:75.5px;top:5.6px;transform:rotate(50deg)" width="11.6" height="11.6" viewBox="0 0 11 11"><path d="M8.9 4.2A3.6 3.6 0 0 0 2.6 3.2" fill="none" stroke="#111" stroke-width="1.4"/><path d="M2.1 6.8A3.6 3.6 0 0 0 8.4 7.8" fill="none" stroke="#111" stroke-width="1.4"/><path d="M1.2 1.4v3h3z" fill="#111"/><path d="M9.8 9.6v-3h-3z" fill="#111"/></svg><span>モデル生成</span></div>
    <svg class="abs" style="left:229.4px;top:75.4px" width="8" height="8" viewBox="0 0 8 8"><path d="M7.400 0.600v6.800h-6.800z" fill="#a3a7ad"/><path d="M7.400 0.400L0.400 7.400" stroke="#1f2123" stroke-width="0.900"/></svg>
  </div>
</div></div>

</body>
</html>
